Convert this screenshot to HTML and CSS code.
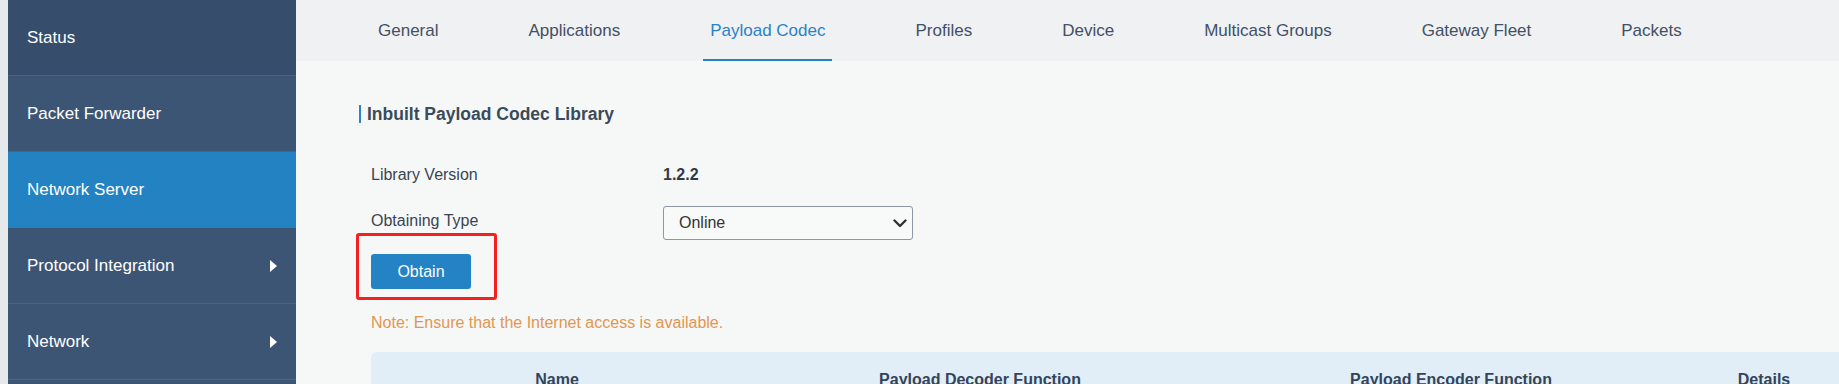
FILE: index.html
```html
<!DOCTYPE html>
<html lang="en">
<head>
<meta charset="utf-8">
<title>Payload Codec</title>
<link rel="stylesheet" href="styles.css">
</head>
<body>
<nav class="sidebar">
  <div class="side-item side-status">Status</div>
  <div class="side-item">Packet Forwarder</div>
  <div class="side-item active">Network Server</div>
  <div class="side-item">Protocol Integration<span class="tri"></span></div>
  <div class="side-item">Network<span class="tri"></span></div>
  <div class="side-item"></div>
</nav>
<main class="main">
  <div class="tabs">
    <div class="tab">General</div>
    <div class="tab">Applications</div>
    <div class="tab active">Payload Codec</div>
    <div class="tab">Profiles</div>
    <div class="tab">Device</div>
    <div class="tab">Multicast Groups</div>
    <div class="tab">Gateway Fleet</div>
    <div class="tab">Packets</div>
  </div>
  <section class="content">
    <h2 class="heading">Inbuilt Payload Codec Library</h2>
    <div class="form">
      <div class="row row-version">
        <div class="label">Library Version</div>
        <div class="value">1.2.2</div>
      </div>
      <div class="row row-type">
        <div class="label">Obtaining Type</div>
        <div class="select">
          <span>Online</span>
          <svg class="chev" width="14" height="9" viewBox="0 0 14 9"><path d="M1.5 1.5 L7 7 L12.5 1.5" fill="none" stroke="#2f3338" stroke-width="2.4" stroke-linecap="round" stroke-linejoin="round"/></svg>
        </div>
      </div>
      <div class="btn-row">
        <button class="btn">Obtain</button>
        <div class="annot"></div>
      </div>
      <p class="note">Note: Ensure that the Internet access is available.</p>
      <table class="table">
        <thead>
          <tr>
            <th class="c1">Name</th>
            <th class="c2">Payload Decoder Function</th>
            <th class="c3">Payload Encoder Function</th>
            <th class="c4">Details</th>
          </tr>
        </thead>
      </table>
    </div>
  </section>
</main>
</body>
</html>
```

FILE: styles.css
```css
html, body {
  margin: 0;
  padding: 0;
}
body {
  display: flex;
  height: 384px;
  overflow: hidden;
  background: #e5e9ec;
  padding-left: 8px;
  font-family: "Liberation Sans", Arial, sans-serif;
  box-sizing: border-box;
}
.sidebar {
  width: 288px;
  flex: none;
  background: #3d5574;
  display: flex;
  flex-direction: column;
}
.side-item {
  height: 75px;
  flex: none;
  border-bottom: 1px solid #4b6281;
  display: flex;
  align-items: center;
  justify-content: space-between;
  padding: 0 19px 0 19px;
  color: #ffffff;
  font-size: 17px;
}
.side-status {
  background: #364d6b;
}
.side-item.active {
  background: #2382c2;
  border-bottom-color: #2f7fb8;
}
.tri {
  width: 0;
  height: 0;
  border-top: 6px solid transparent;
  border-bottom: 6px solid transparent;
  border-left: 7px solid #ffffff;
}
.main {
  flex: 1;
  min-width: 0;
  background: #f6f8f8;
  overflow: hidden;
}
.tabs {
  height: 61px;
  background: #eff1f3;
  display: flex;
  padding-left: 75px;
  gap: 76px;
}
.tab {
  padding: 0 7px;
  display: flex;
  align-items: center;
  font-size: 17px;
  color: #425066;
  white-space: nowrap;
  box-sizing: border-box;
  border-bottom: 2px solid transparent;
  padding-top: 2px;
}
.tab.active {
  color: #2a82c8;
  border-bottom-color: #2382c4;
}
.content {
  padding: 44px 0 0 63px;
}
.heading {
  margin: 0;
  height: 18px;
  line-height: 18px;
  border-left: 2px solid #2a85c8;
  padding-left: 6px;
  font-size: 17.5px;
  font-weight: bold;
  color: #3b4a5a;
}
.form {
  padding-left: 12px;
  margin-top: 35px;
}
.row {
  display: flex;
  align-items: center;
}
.row-version {
  height: 34px;
}
.row-type {
  margin-top: 14px;
}
.label {
  width: 292px;
  font-size: 16px;
  color: #3a4452;
}
.row-type .label {
  margin-top: -4px;
}
.value {
  font-size: 16px;
  font-weight: bold;
  color: #333a44;
}
.select {
  width: 250px;
  height: 34px;
  box-sizing: border-box;
  border: 1px solid #8c98a5;
  border-radius: 3px;
  background: #f8f9f9;
  display: flex;
  align-items: center;
  justify-content: space-between;
  padding: 0 5px 0 15px;
  font-size: 16px;
  color: #333;
}
.chev {
  display: block;
}
.btn-row {
  position: relative;
  margin-top: 14px;
  height: 35px;
}
.btn {
  width: 100px;
  height: 35px;
  border: none;
  border-radius: 3px;
  background: #2383c4;
  color: #ffffff;
  font-family: "Liberation Sans", Arial, sans-serif;
  font-size: 16px;
  padding: 0;
}
.annot {
  position: absolute;
  left: -15px;
  top: -21px;
  width: 141px;
  height: 67px;
  box-sizing: border-box;
  border: 3px solid #f52020;
  border-radius: 3px;
}
.note {
  margin: 24px 0 0 0;
  line-height: 20px;
  font-size: 16px;
  color: #e3964f;
}
.table {
  margin-top: 19px;
  border-collapse: separate;
  border-spacing: 0;
  table-layout: fixed;
  width: 1472px;
}
.table th {
  height: 51px;
  padding: 4px 0 0 0;
  box-sizing: border-box;
  background: #e1eef8;
  font-size: 16px;
  font-weight: bold;
  color: #34445a;
  text-align: center;
}
.c1 { width: 372px; border-top-left-radius: 6px; }
.c2 { width: 474px; }
.c3 { width: 468px; }
.c4 { width: 158px; }
```
